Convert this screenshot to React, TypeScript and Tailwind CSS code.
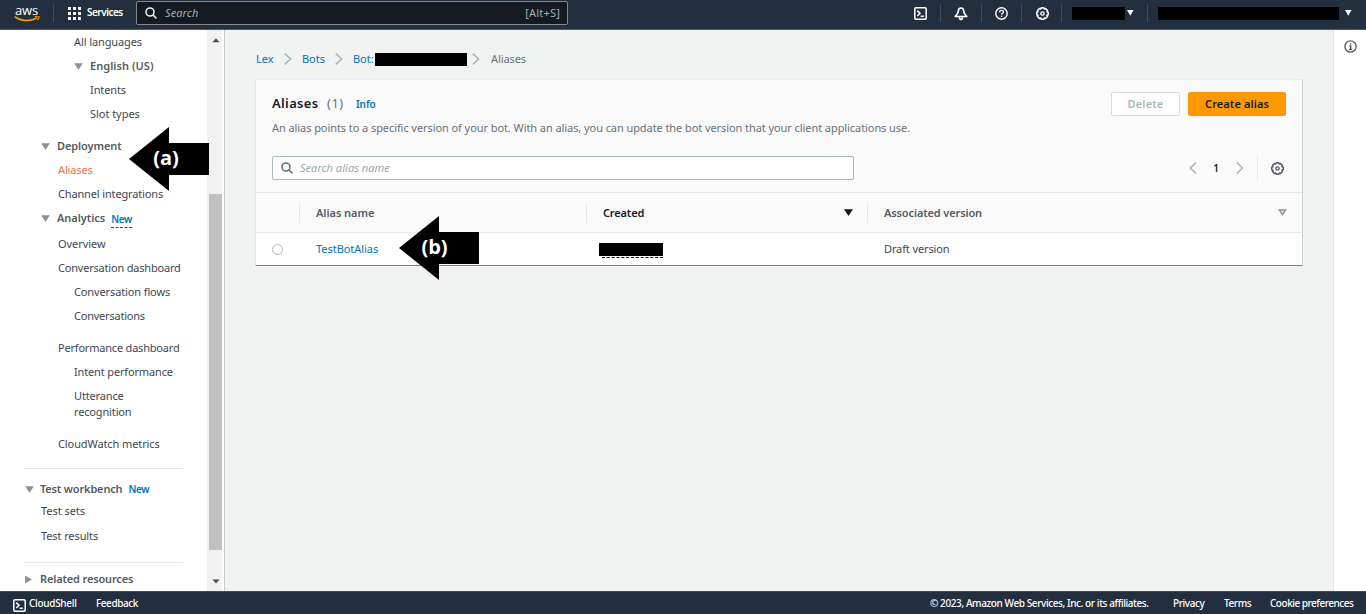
import type { ReactNode } from "react";

const cx = (...parts: (string | false | undefined)[]) => parts.filter(Boolean).join(" ");

function Caret({ open = true }: { open?: boolean }) {
  return (
    <svg width="9" height="9" viewBox="0 0 9 9" className="shrink-0" fill="#879596">
      {open ? <path d="M0.2 1.2H8.8L4.5 8Z" /> : <path d="M1 0.4V8.6L8 4.5Z" />}
    </svg>
  );
}

function DownTriangle() {
  return (
    <svg width="7" height="6" viewBox="0 0 7 6" className="shrink-0" fill="#fff">
      <path d="M0 0H6.6L3.3 5.8Z" />
    </svg>
  );
}

function Gear({ color, size = 14 }: { color: string; size?: number }) {
  return (
    <svg width={size} height={size} viewBox="0 0 14 14" fill="none" stroke={color}>
      <path
        strokeWidth="1.6"
        strokeLinejoin="round"
        d="M5.6 0.8h2.8l.5 1.4 1.4-.6 2.1 2.1-.6 1.4 1.4.5v2.8l-1.4.5.6 1.4-2.1 2.1-1.4-.6-.5 1.4H5.6l-.5-1.4-1.4.6-2.1-2.1.6-1.4-1.4-.5V5.6l1.4-.5-.6-1.4 2.1-2.1 1.4.6z"
      />
      <circle cx="7" cy="7" r="1.8" strokeWidth="1.5" />
    </svg>
  );
}

function SearchIcon({ color }: { color: string }) {
  return (
    <svg width="12" height="12" viewBox="0 0 12 12" fill="none" stroke={color} strokeWidth="1.6">
      <circle cx="5" cy="5" r="4" />
      <path d="M8 8l3.4 3.4" />
    </svg>
  );
}

function ShellIcon() {
  return (
    <svg width="13" height="13" viewBox="0 0 13 13" fill="none" stroke="#fff" strokeWidth="1.5">
      <rect x="0.8" y="0.8" width="11.4" height="11.4" rx="1.2" />
      <path d="M3.3 3.6L6 6.3L3.3 9M6.6 9.2h3.2" />
    </svg>
  );
}

function Chevron({ left = false, thin = false }: { left?: boolean; thin?: boolean }) {
  return (
    <svg width="8" height="12" viewBox="0 0 8 12" fill="none" stroke="#aab7b8" strokeWidth={thin ? 1.5 : 1.7} className="shrink-0">
      <path d={left ? "M7 0.6L1.4 6L7 11.4" : "M0.8 0.6L6.6 6L0.8 11.4"} />
    </svg>
  );
}

function AwsLogo() {
  return (
    <div className="flex w-[25px] flex-col items-center">
      <span className="font-['Open_Sans',sans-serif] text-[13px] leading-[9px] font-medium tracking-[-0.1px] text-white">aws</span>
      <svg width="26" height="7" viewBox="0 0 26 7" fill="none" className="mt-px">
        <path d="M0.6 0.6C7 5.4 17 5.8 23.2 1.6" stroke="#ff9900" strokeWidth="1.6" />
        <path d="M20.8 0.5C22.6 -0.1 24.8 0 25 0.6C25.1 1.6 24.6 3.2 23.4 4.2" stroke="#ff9900" strokeWidth="1.1" />
      </svg>
    </div>
  );
}

function Item({ children, className }: { children: ReactNode; className: string }) {
  return <a className={cx("block h-6 shrink-0 leading-6 whitespace-nowrap", className)}>{children}</a>;
}

function Section({ children, className, open = true }: { children: ReactNode; className: string; open?: boolean }) {
  return (
    <div className={cx("flex h-6 shrink-0 items-center font-semibold whitespace-nowrap text-[#545b64]", className)}>
      <Caret open={open} />
      {children}
    </div>
  );
}

function Sidebar() {
  return (
    <aside className="flex w-[225px] shrink-0 border-r border-[#c5cccd] bg-white">
      <nav className="flex w-[207px] flex-col overflow-hidden text-[#414750]">
        <Item className="pl-[74px] tracking-[-0.1px]">All languages</Item>
        <Section className="gap-[7px] pl-[74px] tracking-[0.05px]">English (US)</Section>
        <Item className="pl-[90px] tracking-[-0.1px]">Intents</Item>
        <Item className="pl-[90px]">Slot types</Item>
        <Section className="mt-2 gap-[7px] pl-[41px] tracking-[-0.1px]">Deployment</Section>
        <Item className="pl-[58px] tracking-[-0.15px] text-[#ec7250]">Aliases</Item>
        <Item className="pl-[58px] tracking-[-0.15px]">Channel integrations</Item>
        <Section className="gap-[7px] pl-[41px]">
          <span>Analytics</span>
          <span className="mt-[3px] -ml-px border-b border-dashed border-[#414750] text-[10px] leading-[15px] tracking-[-0.4px] text-[#0073bb]">New</span>
        </Section>
        <Item className="mt-0.5 pl-[58px]">Overview</Item>
        <Item className="pl-[58px] tracking-[-0.2px]">Conversation dashboard</Item>
        <Item className="pl-[74px] tracking-[-0.12px]">Conversation flows</Item>
        <Item className="pl-[74px] tracking-[-0.22px]">Conversations</Item>
        <Item className="mt-2 pl-[58px] tracking-[-0.2px]">Performance dashboard</Item>
        <Item className="pl-[74px] tracking-[-0.15px]">Intent performance</Item>
        <a className="block w-[150px] py-1 pl-[74px] leading-4 tracking-[-0.15px]">Utterance recognition</a>
        <Item className="mt-2 pl-[58px] tracking-[-0.1px]">CloudWatch metrics</Item>
        <hr className="mt-3 mr-6 ml-6 h-px border-0 bg-[#e3e8e8]" />
        <Section className="mt-2 gap-[6px] pl-[25px] tracking-[-0.16px]">
          <span>Test workbench</span>
          <span className="text-[10px] tracking-[-0.4px] text-[#0073bb]">New</span>
        </Section>
        <Item className="-mt-0.5 pl-[41px]">Test sets</Item>
        <Item className="mt-px pl-[41px] tracking-[-0.1px]">Test results</Item>
        <hr className="mt-[14px] mr-6 ml-6 h-px shrink-0 border-0 bg-[#e3e8e8]" />
        <Section open={false} className="mt-1 gap-[7px] pl-6 tracking-[-0.15px]">Related resources</Section>
      </nav>
      <div className="flex w-[15px] flex-col items-center bg-[#f1f1f1]">
        <svg width="8" height="5" viewBox="0 0 8 5" className="mt-2 ml-0.5" fill="#505050"><path d="M0.4 4.2H7.6L4 0.2Z" /></svg>
        <div className="mt-[151px] ml-0.5 h-[356px] w-[13px] bg-[#c1c1c1]" />
        <svg width="8" height="5" viewBox="0 0 8 5" className="mt-[29px] ml-0.5" fill="#505050"><path d="M0.4 0.4H7.6L4 4.4Z" /></svg>
      </div>
    </aside>
  );
}

function TopBar() {
  return (
    <header className="flex h-[30px] shrink-0 items-start border-b border-[#515866] bg-[#232f3e] text-[11px] text-white">
      <div className="mt-[6px] ml-[14px]"><AwsLogo /></div>
      <div className="mt-1 ml-[14px] h-[18px] w-px bg-[#414d5c]" />
      <svg width="13" height="13" viewBox="0 0 13 13" fill="#fff" className="mt-[7px] ml-[14px]">
        {[0, 5, 10].flatMap((x) => [0, 5, 10].map((y) => <rect key={`${x}-${y}`} x={x} y={y} width="3" height="3" />))}
      </svg>
      <span className="mt-1 ml-[6px] w-[37px] text-[10px] leading-4 font-semibold tracking-[-0.5px]">Services</span>
      <div className="mt-px ml-[12px] flex h-[24px] w-[432px] items-center rounded-[2px] border border-[#808a91] bg-[#16191f] pr-[7px] pl-2">
        <SearchIcon color="#e8ecee" />
        <span className="ml-2 tracking-[0.1px] text-[#a2adae] italic">Search</span>
        <span className="ml-auto tracking-[0.2px] text-[#a2adae]">[Alt+S]</span>
      </div>
      <div className="mt-[7px] ml-[346px]"><ShellIcon /></div>
      <div className="mt-1 ml-[13px] h-[18px] w-px bg-[#414d5c]" />
      <svg width="14" height="14" viewBox="0 0 14 14" fill="none" stroke="#fff" strokeWidth="1.7" strokeLinejoin="round" className="mt-[7px] ml-[13px]">
        <path d="M7 1C5.2 1 4.4 2.2 4.4 3.8C4.4 6.4 3 7.4 1.2 9.5H12.8C11 7.4 9.6 6.4 9.6 3.8C9.6 2.2 8.8 1 7 1Z" />
        <path d="M5.5 10.2C5.5 13.2 8.5 13.2 8.5 10.2" />
      </svg>
      <div className="mt-1 ml-[13px] h-[18px] w-px bg-[#414d5c]" />
      <svg width="13" height="13" viewBox="0 0 13 13" fill="none" stroke="#fff" strokeWidth="1.4" className="mt-[7px] ml-[13px]">
        <circle cx="6.5" cy="6.5" r="5.7" />
        <path d="M4.6 5.2C4.6 2.7 8.5 2.8 8.5 5C8.5 6.4 6.6 6.2 6.6 7.8M6.6 8.8V10.1" />
      </svg>
      <div className="mt-1 ml-[13px] h-[18px] w-px bg-[#414d5c]" />
      <div className="mt-[7px] ml-[14px]"><Gear color="#fff" size={13} /></div>
      <div className="mt-1 ml-[12px] h-[18px] w-px bg-[#414d5c]" />
      <div className="mt-[7px] ml-[10px] h-[13px] w-[53px] bg-black" />
      <div className="mt-[10px] ml-[2px]"><DownTriangle /></div>
      <div className="mt-1 ml-[13px] h-[18px] w-px bg-[#414d5c]" />
      <div className="mt-[7px] ml-[10px] h-[13px] w-[181px] bg-black" />
      <div className="mt-[10px] ml-[6px]"><DownTriangle /></div>
    </header>
  );
}

function Breadcrumbs() {
  return (
    <div className="flex h-4 items-center text-[#0073bb]">
      <span className="w-[17px] whitespace-nowrap">Lex</span>
      <span className="ml-[11px] flex"><Chevron /></span>
      <span className="ml-[10px] w-[22px] whitespace-nowrap">Bots</span>
      <span className="ml-[11px] flex"><Chevron /></span>
      <span className="ml-[10px] w-[22px] whitespace-nowrap">Bot:</span>
      <span className="h-[13px] w-[92px] bg-black" />
      <span className="ml-[5px] flex"><Chevron /></span>
      <span className="ml-[11px] tracking-[-0.1px] text-[#687078]">Aliases</span>
    </div>
  );
}

function AliasesCard() {
  return (
    <section className="mt-3 h-[187px] w-[1048px] border border-t-[#eaeded] border-r-[#ccd1d3] border-b-[#7b868c] border-l-[#e5e9e9] bg-[#fafafa]">
      <div className="h-[112px] px-4 pt-3">
        <div className="flex h-6 items-center">
          <h1 className="w-[47px] text-[13px] font-semibold tracking-[0.35px] whitespace-nowrap text-[#16191f]">Aliases</h1>
          <span className="ml-2 w-[17px] text-[13px] tracking-[0.5px] whitespace-nowrap text-[#687078]">(1)</span>
          <a className="ml-[12px] text-[10px] font-semibold tracking-[-0.1px] text-[#0073bb]">Info</a>
          <button className="ml-auto h-6 w-[69px] rounded-[2px] border border-[#d5dbdb] bg-white font-semibold tracking-[0.15px] text-[#aab7b8]">Delete</button>
          <button className="ml-2 h-6 w-[98px] rounded-[2px] bg-[#ff9900] font-semibold tracking-[0.1px] text-[#16191f]">Create alias</button>
        </div>
        <p className="mt-1 leading-4 tracking-[-0.075px] whitespace-nowrap text-[#687078]">
          An alias points to a specific version of your bot. With an alias, you can update the bot version that your client applications use.
        </p>
        <div className="mt-5 flex h-6 items-center">
          <div className="flex h-6 w-[582px] items-center rounded-[2px] border border-[#aab7b8] bg-white pl-2">
            <SearchIcon color="#687078" />
            <span className="ml-[7px] tracking-[0.03px] text-[#9ba7a8] italic">Search alias name</span>
          </div>
          <div className="ml-auto flex h-6 items-center">
            <Chevron left thin />
            <span className="mr-[16px] ml-[15px] w-[8px] text-center text-[10px] font-semibold text-[#16191f]">1</span>
            <Chevron thin />
            <div className="ml-[13px] h-6 w-px bg-[#e3e8e8]" />
            <div className="mr-[2px] ml-[13px]"><Gear color="#545b64" size={13} /></div>
          </div>
        </div>
      </div>
      <div className="flex h-[41px] items-center border-y border-[#e5e9e9] font-semibold text-[#545b64]">
        <div className="h-5 w-[44px] border-r border-[#e5e9e9]" />
        <div className="h-5 w-[287px] border-r border-[#e5e9e9] pl-[16px] leading-5">Alias name</div>
        <div className="flex h-5 w-[281px] items-center justify-between border-r border-[#e5e9e9] pr-[14px] pl-[16px] leading-5 tracking-[-0.15px] text-[#16191f]">
          Created
          <svg width="9" height="7" viewBox="0 0 9 7" fill="#16191f"><path d="M0 0.2H9L4.5 7Z" /></svg>
        </div>
        <div className="flex h-5 flex-1 items-center justify-between pr-[15px] pl-[16px] leading-5">
          <span className="tracking-[-0.13px]">Associated version</span>
          <svg width="9" height="7" viewBox="0 0 9 7" fill="none" stroke="#879596" strokeWidth="1.5"><path d="M1.4 0.9H7.6L4.5 5.5Z" /></svg>
        </div>
      </div>
      <div className="flex h-[32px] items-center bg-white">
        <div className="w-[44px] pl-[16px]"><div className="h-[11px] w-[11px] rounded-full border border-[#aab7b8] bg-white" /></div>
        <a className="mt-px w-[287px] pl-4 text-[#0073bb]">TestBotAlias</a>
        <div className="w-[281px] pt-0.5 pl-[12px]">
          <div className="h-[13px] w-[64px] bg-black" />
          <div className="ml-[3px] w-[61px] border-b border-dashed border-black pt-px" />
        </div>
        <div className="mt-px pl-4 tracking-[-0.12px] text-[#414750]">Draft version</div>
      </div>
    </section>
  );
}

function Callout({ label, className }: { label: string; className: string }) {
  return (
    <div className={cx("absolute h-16 w-20", className)}>
      <svg width="80" height="64" viewBox="0 0 80 64" className="absolute inset-0">
        <path d="M0 32L40 0V16H80V48H40V64Z" fill="#000" />
      </svg>
      <span className="relative block text-center font-['Open_Sans',sans-serif] text-[20px] font-bold tracking-normal text-white">{label}</span>
    </div>
  );
}

function Footer() {
  return (
    <footer className="flex h-[23px] shrink-0 items-center border-t border-[#424c59] bg-[#232f3e] text-[10px] font-medium tracking-[-0.4px] whitespace-nowrap text-white">
      <div className="mt-1 ml-[13px]"><ShellIcon /></div>
      <span className="ml-[3px] w-[47px] tracking-[-0.3px]">CloudShell</span>
      <span className="ml-5 tracking-[-0.45px]">Feedback</span>
      <span className="ml-auto w-[219px]">© 2023, Amazon Web Services, Inc. or its affiliates.</span>
      <span className="ml-6 w-[32px]">Privacy</span>
      <span className="ml-[19px] w-[27px]">Terms</span>
      <span className="ml-[19px] w-[96px] tracking-[-0.48px]">Cookie preferences</span>
    </footer>
  );
}

export default function App() {
  return (
    <div className="relative flex h-[614px] w-[1366px] flex-col overflow-hidden bg-[#f1f3f3] font-['Noto_Sans',sans-serif] text-[11px] tracking-[-0.04px]">
      <TopBar />
      <div className="flex h-[561px]">
        <Sidebar />
        <main className="flex-1 pt-[21px] pl-[30px]">
          <div className="pl-px"><Breadcrumbs /></div>
          <AliasesCard />
        </main>
        <aside className="w-[33px] shrink-0 border-l border-[#e3e7e7] bg-white pt-[10px] pl-[10px]">
          <svg width="13" height="13" viewBox="0 0 13 13" fill="none" stroke="#545b64" strokeWidth="1.4">
            <circle cx="6.5" cy="6.5" r="5.6" />
            <path d="M6.6 3v1.5M5.2 5.9h1.5v3.6M4.9 9.4h3.4" />
          </svg>
        </aside>
      </div>
      <Footer />
      <Callout label="(a)" className="top-[127px] left-[129px] pr-[6px] leading-[62px]" />
      <Callout label="(b)" className="top-[216px] left-[399px] pr-[9px] leading-[61px]" />
    </div>
  );
}
